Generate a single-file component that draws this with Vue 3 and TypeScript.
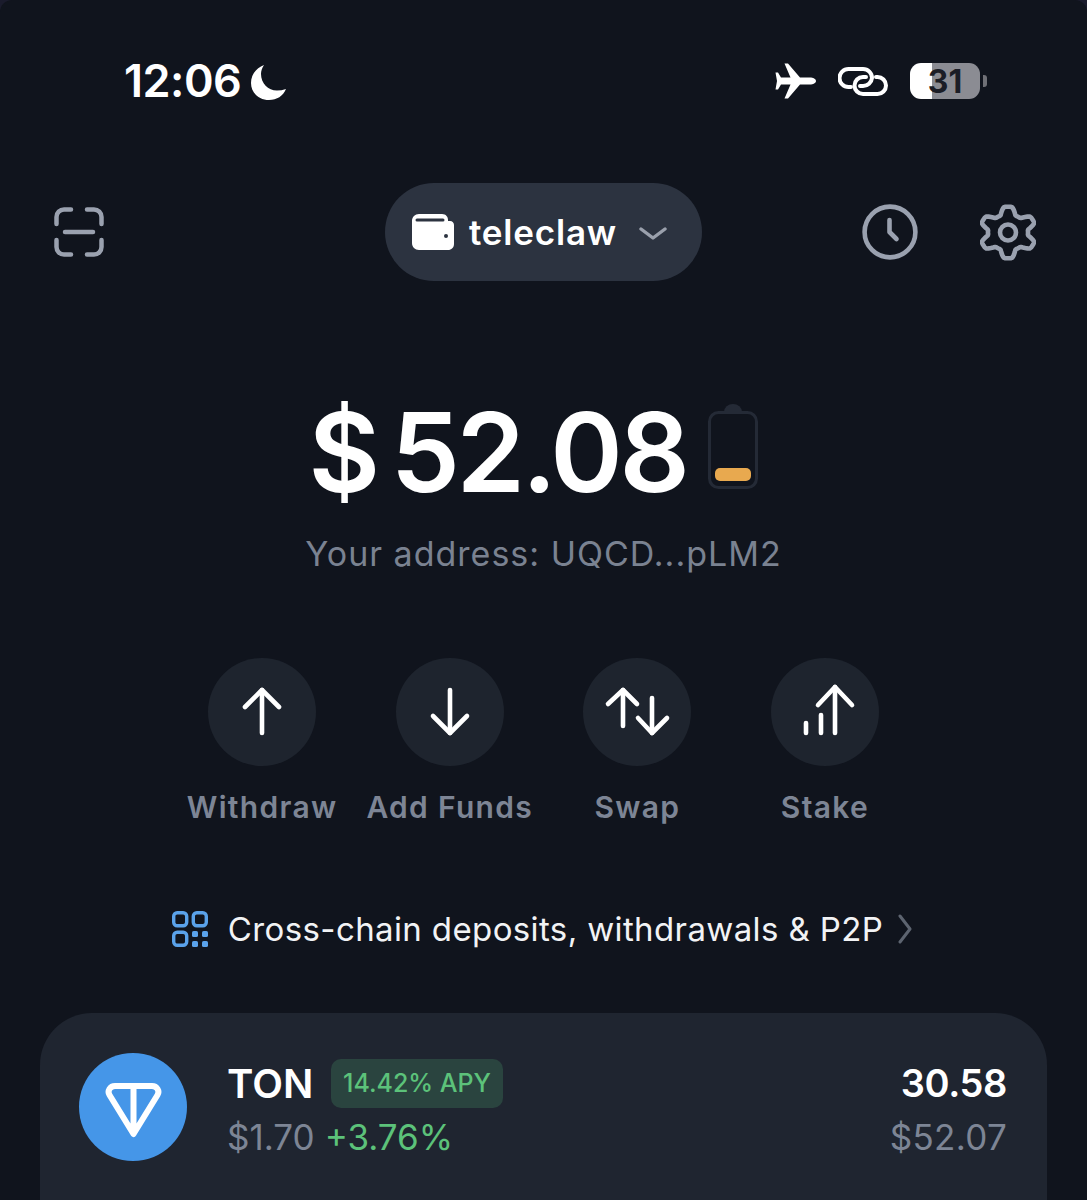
<script setup lang="ts">
const actions = [
  { label: 'Withdraw', paths: ['M54 75V32', 'M37 49L54 32L71 49'] },
  { label: 'Add Funds', paths: ['M54 32V75', 'M37 58L54 75L71 58'] },
  { label: 'Swap', paths: ['M40 68V32', 'M25 46L40 32L54 46', 'M69 40V75', 'M55 60L69 75L84 60'] },
  { label: 'Stake', paths: ['M64 75V29', 'M47 47L64 29L81 47', 'M50 57V75', 'M35 65V75'] },
]

// wavy six lobed outline of the settings cog
function gearPath(): string {
  const pts: string[] = []
  for (let i = 0; i < 120; i++) {
    const a = (i / 120) * Math.PI * 2
    const wave = Math.max(-1, Math.min(1, 1.5 * Math.cos(6 * (a + Math.PI / 2))))
    const r = 22 + 3.8 * wave
    const x = 28 + 1.1 * r * Math.cos(a)
    const y = 28.5 + r * Math.sin(a)
    pts.push(`${x.toFixed(2)} ${y.toFixed(2)}`)
  }
  return 'M' + pts.join('L') + 'Z'
}
const gear = gearPath()
</script>

<template>
  <div class="screen">
    <div class="status">
      <div class="time">
        <span>12:06</span>
        <svg class="moon" width="35" height="35" viewBox="0 0 35 35">
          <path fill="#fff" d="M13 0C5 3 0 10 0 18C0 28 8 35 18 35C26 35 32 31 35 24C32 25 29 25.5 26 25.5C17 25.5 10 18 10 9C10 6 11 3 13 0Z" />
        </svg>
      </div>
      <div class="status-icons">
        <svg width="41" height="36" viewBox="0 0 41 36">
          <path fill="#fff" d="M41 18C41 16 38 14.5 35 14.5H25L13 .5H9.5L15.5 14.5H6L3 9.5H.5L2 18L.5 26.5H3L6 21.5H15.5L9.5 35.5H13L25 21.5H35C38 21.5 41 20 41 18Z" />
        </svg>
        <svg class="chain" width="50" height="29" viewBox="0 0 50 29" fill="none" stroke="#fff" stroke-width="4" stroke-linecap="round">
          <path d="M13 20H10.5A9 9 0 0 1 10.5 2H25A9 9 0 0 1 34 11A9 9 0 0 1 25 19H22" />
          <path d="M38 10H39.5A8.5 8.5 0 0 1 39.5 27H25A8.5 8.5 0 0 1 16.5 18.5A8.5 8.5 0 0 1 25 10H28" />
        </svg>
        <div class="battery"><span>31</span></div>
        <div class="battery-tip"></div>
      </div>
    </div>

    <header class="topbar">
      <svg class="scan" width="50" height="50" viewBox="0 0 50 50" fill="none" stroke="#9aa1af" stroke-width="4.5" stroke-linecap="round">
        <path d="M2.5 17V10A7.5 7.5 0 0 1 10 2.5H17" />
        <path d="M33 2.5H40A7.5 7.5 0 0 1 47.5 10V17" />
        <path d="M2.5 33V40A7.5 7.5 0 0 0 10 47.5H17" />
        <path d="M47.5 33V40A7.5 7.5 0 0 1 40 47.5H33" />
        <path d="M11 25H39" />
      </svg>
      <div class="wallet-pill">
        <svg width="42" height="36" viewBox="0 0 42 36">
          <path fill="#fff" d="M7 0H30C34 0 36 3 36 6V7H38C40.5 7 42 9 42 11V30C42 33.5 39.5 36 36 36H7C3 36 0 33 0 29V7C0 3 3 0 7 0Z" />
          <path d="M5 6H31" stroke="#2c3340" stroke-width="3" stroke-linecap="round" />
          <circle cx="34" cy="22" r="2" fill="#2c3340" />
        </svg>
        <span class="wallet-name">teleclaw</span>
        <svg class="wallet-chev" width="28" height="13" viewBox="0 0 28 13" fill="none" stroke="#9aa0ac" stroke-width="3.4" stroke-linecap="round" stroke-linejoin="round">
          <path d="M2 2L14 11L26 2" />
        </svg>
      </div>
      <div class="top-right">
        <svg width="56" height="56" viewBox="0 0 56 56" fill="none" stroke="#9aa1af" stroke-width="4.6" stroke-linecap="round" stroke-linejoin="round">
          <circle cx="28" cy="28" r="25.4" />
          <path d="M27.5 16V28L34.5 35" />
        </svg>
        <svg width="56" height="57" viewBox="0 0 56 57" fill="none" stroke="#9aa1af" stroke-width="4.6" stroke-linejoin="round">
          <path :d="gear" />
          <circle cx="28" cy="28.5" r="8" />
        </svg>
      </div>
    </header>

    <section class="balance">
      <div class="amount">
        <span class="dollar">$</span><span>52.08</span>
        <svg class="low-battery" width="50" height="85" viewBox="0 0 50 85" fill="none">
          <path d="M16 8A9 8 0 0 1 34 8Z" fill="#242a36" />
          <rect x="1.5" y="8.5" width="47" height="75" rx="9" stroke="#242a36" stroke-width="3" />
          <rect x="7" y="64" width="36" height="13" rx="5" fill="#e8a94f" />
        </svg>
      </div>
      <div class="address">Your address: UQCD...pLM2</div>
    </section>

    <nav class="actions">
      <div v-for="a in actions" :key="a.label" class="action">
        <div class="action-circle">
          <svg width="108" height="108" viewBox="0 0 108 108" fill="none" stroke="#fff" stroke-width="4.6" stroke-linecap="round" stroke-linejoin="round">
            <path v-for="p in a.paths" :key="p" :d="p" />
          </svg>
        </div>
        <div class="action-label">{{ a.label }}</div>
      </div>
    </nav>

    <div class="cross-chain">
      <svg width="36" height="36" viewBox="0 0 36 36" fill="none" stroke="#5aa2ea" stroke-width="3.4">
        <rect x="1.7" y="1.7" width="13" height="13" rx="3.5" />
        <rect x="21.3" y="1.7" width="13" height="13" rx="3.5" />
        <rect x="1.7" y="21.3" width="13" height="13" rx="3.5" />
        <g fill="#5aa2ea" stroke="none">
          <rect x="20" y="20" width="6" height="6" rx="1.6" />
          <rect x="30" y="20" width="6" height="6" rx="1.6" />
          <rect x="20" y="30" width="6" height="6" rx="1.6" />
          <rect x="30" y="30" width="6" height="6" rx="1.6" />
        </g>
      </svg>
      <span class="cross-text">Cross-chain deposits, withdrawals &amp; P2P</span>
      <svg class="chev" width="14" height="30" viewBox="0 0 14 30" fill="none" stroke="#5d6470" stroke-width="3" stroke-linecap="round" stroke-linejoin="round">
        <path d="M2 2L12 15L2 28" />
      </svg>
    </div>

    <section class="card">
      <svg class="ton-logo" width="108" height="108" viewBox="0 0 108 108" fill="none">
        <circle cx="54" cy="54" r="54" fill="#4596e8" />
        <path d="M36 33H73C78 33 81 38 78.5 42L54.5 81L30.5 42C28 38 31 33 36 33ZM54.5 33V81" stroke="#fff" stroke-width="6" stroke-linejoin="round" />
      </svg>
      <div class="token-info">
        <div class="token-top">
          <span class="token-name">TON</span>
          <span class="apy">14.42% APY</span>
        </div>
        <div class="token-price">
          <span class="price">$1.70</span>
          <span class="change">+3.76%</span>
        </div>
      </div>
      <div class="token-values">
        <div class="token-amount">30.58</div>
        <div class="token-usd">$52.07</div>
      </div>
    </section>
  </div>
</template>

<style>
body {
  background: #1a1b2c;
}
</style>

<style scoped>
.screen {
  width: 1087px;
  height: 1200px;
  overflow: hidden;
  display: flex;
  flex-direction: column;
  background: #10141d;
  border-radius: 12px 12px 0 0;
  font-family: Inter, "Liberation Sans", sans-serif;
  color: #fff;
}

.status {
  height: 183px;
  flex: none;
  box-sizing: border-box;
  padding: 56px 100px 0 124px;
  display: flex;
  justify-content: space-between;
  align-items: flex-start;
}

.time {
  display: flex;
  align-items: center;
  gap: 10px;
  font-size: 45px;
  font-weight: 600;
  line-height: 50px;
  letter-spacing: -0.5px;
}

.moon {
  margin-top: 2px;
}

.status-icons {
  display: flex;
  align-items: center;
  height: 50px;
}

.chain {
  margin-left: 22px;
}

.battery {
  margin-left: 22px;
  width: 70px;
  height: 36px;
  border-radius: 11px;
  background: linear-gradient(90deg, #fff 0 22px, #8b8c93 22px);
  display: flex;
  align-items: center;
  justify-content: center;
  color: #1b1d26;
  font-size: 32px;
  font-weight: 700;
}

.battery-tip {
  width: 4px;
  height: 12px;
  margin-left: 3px;
  border-radius: 0 3px 3px 0;
  background: #6f7076;
}

.topbar {
  height: 98px;
  flex: none;
  box-sizing: border-box;
  padding: 0 51px;
  display: grid;
  grid-template-columns: 1fr auto 1fr;
  align-items: center;
}

.scan {
  margin-left: 3px;
}

.wallet-pill {
  height: 98px;
  width: 317px;
  box-sizing: border-box;
  padding-left: 27px;
  border-radius: 49px;
  background: #2c3340;
  display: flex;
  align-items: center;
  gap: 15px;
}

.wallet-name {
  font-size: 35px;
  font-weight: 600;
  width: 155px;
  letter-spacing: 0.8px;
}

.wallet-chev {
  margin-top: 3px;
}

.top-right {
  display: flex;
  justify-content: flex-end;
  align-items: center;
  gap: 62px;
}

.balance {
  flex: none;
  padding-top: 116px;
  display: flex;
  flex-direction: column;
  align-items: center;
}

.amount {
  height: 110px;
  display: flex;
  align-items: center;
  margin-right: 20px;
  font-size: 110px;
  font-weight: 600;
  line-height: 110px;
  letter-spacing: -3.4px;
}

.dollar {
  margin-right: 14px;
}

.low-battery {
  margin-left: 22px;
  margin-top: -11px;
}

.address {
  margin-top: 27px;
  font-size: 34px;
  line-height: 40px;
  color: #7a8291;
  letter-spacing: 1px;
}

.actions {
  flex: none;
  margin-top: 84px;
  display: flex;
  justify-content: center;
}

.action {
  width: 187.6px;
  display: flex;
  flex-direction: column;
  align-items: center;
}

.action-circle {
  width: 108px;
  height: 108px;
  border-radius: 50%;
  background: #1e242e;
}

.action-circle svg {
  display: block;
}

.action-label {
  margin-top: 23px;
  font-size: 30px;
  font-weight: 600;
  line-height: 36px;
  letter-spacing: 1.3px;
  white-space: nowrap;
  color: #7d8595;
}

.cross-chain {
  flex: none;
  margin-top: 84px;
  height: 40px;
  padding-right: 3px;
  display: flex;
  justify-content: center;
  align-items: center;
  gap: 20px;
  font-size: 33px;
  line-height: 40px;
  color: #f2f3f5;
}

.cross-text {
  letter-spacing: 0.38px;
}

.chev {
  margin-left: -5px;
}

.card {
  flex: 1;
  margin: 64px 40px 0;
  padding: 40px 40px 0 39px;
  border-radius: 52px 52px 0 0;
  background: #1f2530;
  display: flex;
  align-items: flex-start;
}

.ton-logo {
  flex: none;
}

.token-info {
  margin-left: 40px;
  flex: 1;
}

.token-top {
  display: flex;
  align-items: center;
  height: 58px;
  margin-top: 1px;
}

.token-name {
  font-size: 40px;
  font-weight: 600;
  width: 104px;
}

.apy {
  height: 49px;
  width: 172px;
  box-sizing: border-box;
  border-radius: 10px;
  background: #2a443f;
  color: #5cc27a;
  display: flex;
  align-items: center;
  justify-content: center;
  font-size: 25px;
  font-weight: 500;
}

.token-price {
  font-size: 35px;
  line-height: 46px;
  margin-top: 2px;
}

.price {
  color: #7d8595;
}

.change {
  margin-left: 10px;
  color: #5cc27a;
}

.token-values {
  text-align: right;
}

.token-amount {
  font-size: 38px;
  font-weight: 600;
  line-height: 58px;
  margin-top: 1px;
  letter-spacing: -0.4px;
}

.token-usd {
  font-size: 35px;
  line-height: 46px;
  margin-top: 2px;
  letter-spacing: 0.3px;
  color: #7d8595;
}
</style>
